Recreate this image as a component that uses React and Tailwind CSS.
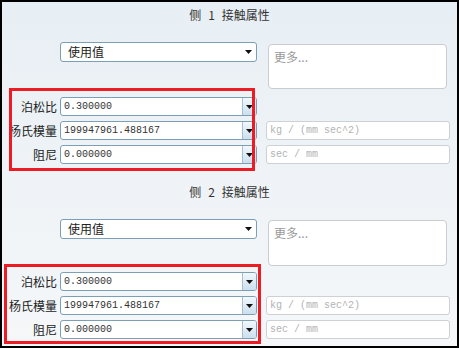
import React from 'react';

const SECTIONS = [
  { side: 1, headTop: 'mt-0', textareaTop: 'mt-[2px] h-[45px]', rowsTop: 'mt-[8px]' },
  { side: 2, headTop: 'mt-[15px]', textareaTop: 'mt-[1px] h-[46px]', rowsTop: 'mt-[6px]' },
];

const ROWS = [
  { label: '泊松比', value: '0.300000', unit: null },
  { label: '杨氏模量', value: '199947961.488167', unit: 'kg / (mm sec^2)' },
  { label: '阻尼', value: '0.000000', unit: 'sec / mm' },
];

function Arrow() {
  return (
    <svg width="7" height="4" viewBox="0 0 7 4" className="block">
      <path d="M0 0h7L3.5 4z" fill="#111" />
    </svg>
  );
}

function Dropdown({ value }) {
  return (
    <div className="w-[197px] h-[20px] rounded-[3px] border border-[#7d9fb5] bg-white flex items-center justify-between pl-[7px] pr-[4px]">
      <span className="text-[12px] text-[#222] leading-none">{value}</span>
      <Arrow />
    </div>
  );
}

function Combo({ value }) {
  return (
    <div className="w-[197px] h-[19px] rounded-[3px] border border-[#7d9fb5] bg-white flex overflow-hidden">
      <span className="flex-1 pl-[3px] flex items-center font-['Liberation_Mono',monospace] text-[10px] text-[#333]">
        {value}
      </span>
      <div className="w-[14px] border-l border-[#a5c0d3] bg-gradient-to-b from-[#f2f7fb] to-[#cbdfee] flex items-center justify-center">
        <Arrow />
      </div>
    </div>
  );
}

function Section({ side, headTop, textareaTop, rowsTop }) {
  return (
    <div className={headTop}>
      <div className="h-[26px] flex items-center justify-center text-[12px] text-[#333]">
        <span>侧</span>
        <span className="mx-[7px]">{side}</span>
        <span>接触属性</span>
      </div>

      <div className="mt-[14px] flex items-start pl-[58px]">
        <Dropdown value="使用值" />
        <div className={`ml-[11px] w-[179px] rounded-[4px] border border-[#c9cdd1] bg-white px-[5px] pt-[3px] text-[12px] text-[#9a9a9a] ${textareaTop}`}>
          更多...
        </div>
      </div>

      <div className={`${rowsTop} flex flex-col gap-[5px]`}>
        {ROWS.map((row) => (
          <div key={row.label} className="flex items-center h-[19px]">
            <span className="w-[55px] text-right text-[12px] text-[#222] whitespace-nowrap">{row.label}</span>
            <div className="ml-[3px]">
              <Combo value={row.value} />
            </div>
            {row.unit && (
              <div className="ml-[9px] w-[184px] h-[19px] rounded-[3px] border border-[#cdd1d4] bg-white pl-[3px] flex items-center font-['Liberation_Mono',monospace] text-[10px] text-[#b3b3b3]">
                {row.unit}
              </div>
            )}
          </div>
        ))}
      </div>
    </div>
  );
}

export default function App() {
  return (
    <div className="relative w-[459px] h-[348px] border-2 border-black bg-gradient-to-b from-[#e8eff4] to-[#f5f7f9] font-['Noto_Sans_CJK_SC',sans-serif] overflow-hidden">
      {SECTIONS.map((s) => (
        <Section key={s.side} {...s} />
      ))}

      {/* annotation boxes */}
      <div className="absolute left-[7px] top-[86px] w-[246px] h-[83px] border-[3px] border-[#ec1c24] pointer-events-none" />
      <div className="absolute left-[2px] top-[262px] w-[257px] h-[80px] border-[3px] border-[#ec1c24] pointer-events-none" />
    </div>
  );
}
